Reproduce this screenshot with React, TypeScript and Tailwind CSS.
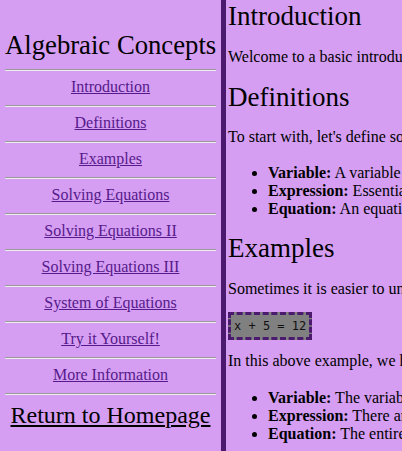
import React from 'react';

const links = [
  'Introduction',
  'Definitions',
  'Examples',
  'Solving Equations',
  'Solving Equations II',
  'Solving Equations III',
  'System of Equations',
  'Try it Yourself!',
  'More Information',
];

function Rule() {
  return <div className="h-[2px] border-t border-t-[#9a9a9a] border-b border-b-[#eeeeee]" />;
}

export default function App() {
  return (
    <div
      className="flex min-h-screen h-[451px] overflow-hidden bg-[#d59ef2] text-black"
      style={{ fontFamily: '"Liberation Serif", "Times New Roman", serif' }}
    >
      {/* Sidebar */}
      <nav className="w-[221px] shrink-0 px-[5px] text-center">
        <h1 className="mt-[30px] mb-[9px] text-[26.7px] leading-[30px] font-normal whitespace-nowrap">
          Algebraic Concepts
        </h1>
        {links.map((label) => (
          <div key={label}>
            <Rule />
            <div className="pt-[7px] pb-[9px] text-[16px] leading-[18px]">
              <a href="#" className="text-[#551a8b] underline">
                {label}
              </a>
            </div>
          </div>
        ))}
        <Rule />
        <div className="pt-[6px] text-[24px] leading-[28px]">
          <a href="#" className="text-black underline">
            Return to Homepage
          </a>
        </div>
      </nav>

      {/* Divider */}
      <div className="w-[5px] shrink-0 bg-[#4b1a6e]" />

      {/* Content */}
      <main className="flex-1 pl-[2px] whitespace-nowrap overflow-hidden text-[16px] leading-[18px]">
        <h2 className="mt-[1px] mb-[17px] text-[27px] leading-[30px] font-normal">Introduction</h2>
        <p className="mb-[16px]">
          Welcome to a basic introduction to algebraic concepts, where we cover the building blocks of algebra.
        </p>
        <h2 className="mb-[16px] text-[27px] leading-[30px] font-normal">Definitions</h2>
        <p className="mb-[18px]">To start with, let's define some of the words we will use throughout these lessons.</p>
        <ul className="mb-[15px] pl-[40px] list-disc">
          <li>
            <b>Variable:</b> A variable is a letter or symbol that stands in for an unknown number.
          </li>
          <li>
            <b>Expression:</b> Essentially a group of numbers, variables and operations.
          </li>
          <li>
            <b>Equation:</b> An equation is two expressions set equal to each other.
          </li>
        </ul>
        <h2 className="mb-[17px] text-[27px] leading-[30px] font-normal">Examples</h2>
        <p className="mb-[14px]">Sometimes it is easier to understand these words when we see them in an example.</p>
        <div className="mb-[12px] inline-block border-[3px] border-dashed border-[#4b1a6e] bg-[#808080] px-[3px] py-[4px]">
          <code
            className="block text-[12px] leading-[14px] text-[#111111] whitespace-pre"
            style={{ fontFamily: '"DejaVu Sans Mono", "Liberation Mono", monospace' }}
          >
            x + 5 = 12
          </code>
        </div>
        <p className="mb-[19px]">In this above example, we have all three of the things we defined earlier.</p>
        <ul className="pl-[40px] list-disc">
          <li>
            <b>Variable:</b> The variable in this example is x.
          </li>
          <li>
            <b>Expression:</b> There are two expressions, x + 5 and 12.
          </li>
          <li>
            <b>Equation:</b> The entire line x + 5 = 12 is the equation.
          </li>
        </ul>
      </main>
    </div>
  );
}
